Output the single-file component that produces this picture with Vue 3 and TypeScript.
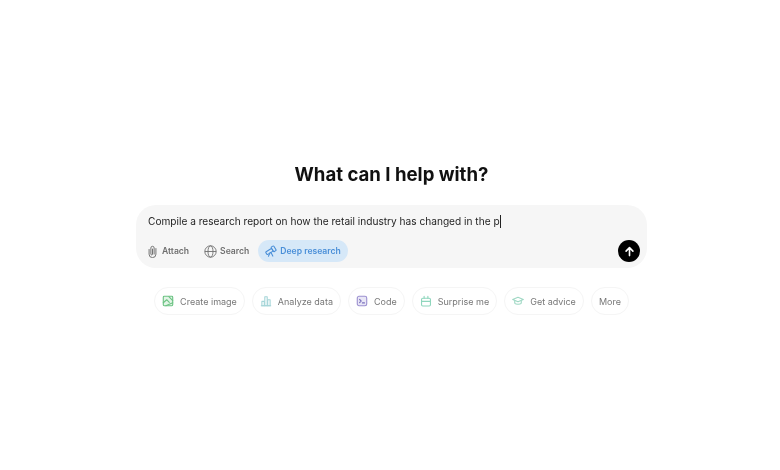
<script setup lang="ts">
const suggestions = [
  { label: 'Create image', icon: 'image', color: '#6cc383' },
  { label: 'Analyze data', icon: 'chart', color: '#a5d5d8' },
  { label: 'Code', icon: 'code', color: '#9c90d0' },
  { label: 'Surprise me', icon: 'gift', color: '#8fd6bd' },
  { label: 'Get advice', icon: 'cap', color: '#9fd8c4' },
  { label: 'More', icon: '', color: '' }
]
</script>

<template>
  <main class="page">
    <h1 class="title">What can I help with?</h1>

    <section class="composer">
      <p class="prompt">Compile a research report on how the retail industry has changed in the p<span class="caret"></span></p>
      <div class="toolbar">
        <button class="tool">
          <svg viewBox="0 0 16 16" fill="none" stroke="currentColor" stroke-width="1.2" stroke-linecap="round">
            <path d="M3.8 5.5v5.8a4.2 4.2 0 0 0 8.4 0V4.4" />
            <path d="M10 11.2V3.6a2 2 0 0 0-4 0v7.6a1 1 0 0 0 2 0V5" />
          </svg>
          Attach
        </button>
        <button class="tool">
          <svg viewBox="0 0 16 16" fill="none" stroke="currentColor" stroke-width="1.1">
            <circle cx="8" cy="8" r="7" />
            <ellipse cx="8" cy="8" rx="3.1" ry="7" />
            <path d="M1 8h14" />
          </svg>
          Search
        </button>
        <button class="tool tool-active">
          <svg viewBox="0 0 16 16" fill="none" stroke="currentColor" stroke-width="1.4" stroke-linecap="round" stroke-linejoin="round">
            <g transform="rotate(-32 8 7)">
              <rect x="0.5" y="5.2" width="9.5" height="4.2" rx="1" />
              <rect x="10" y="3.6" width="4" height="7.2" rx="1" />
            </g>
            <path d="M6.8 10.2 4.6 15M7.8 9.8l2.6 5" />
          </svg>
          Deep research
        </button>
        <button class="send" aria-label="Send">
          <svg viewBox="0 0 16 16" fill="none" stroke="#fff" stroke-width="2" stroke-linecap="round" stroke-linejoin="round">
            <path d="M8 13V3.5M3.8 7.5 8 3.3l4.2 4.2" />
          </svg>
        </button>
      </div>
    </section>

    <nav class="chips">
      <button v-for="s in suggestions" :key="s.label" class="chip">
        <svg v-if="s.icon" viewBox="0 0 14 14" fill="none" :stroke="s.color" stroke-width="1.3" stroke-linecap="round" stroke-linejoin="round">
          <template v-if="s.icon === 'image'">
            <rect x="1.5" y="1.5" width="11" height="11" rx="1" fill="#e2f4e6" />
            <path d="M1.5 9 5.5 5.5l3 3M8 2l4.5 4.5M4.5 12.5l8-3.5" />
          </template>
          <template v-else-if="s.icon === 'chart'">
            <path d="M1.5 12.5h11" />
            <rect x="2.2" y="7.5" width="2.8" height="5" />
            <rect x="5.6" y="2" width="2.8" height="10.5" />
            <rect x="9" y="5.5" width="2.8" height="7" />
          </template>
          <template v-else-if="s.icon === 'code'">
            <rect x="1.5" y="1.5" width="11" height="11" rx="2" fill="#e9e7f6" />
            <path d="M4.2 5.2 6 7 4.2 8.8M7.5 9.2h2.4" stroke="#7a70bd" />
          </template>
          <template v-else-if="s.icon === 'gift'">
            <rect x="1.8" y="3.8" width="10.4" height="9" rx="1.4" />
            <path d="M1.8 7.5h10.4M4.8 3.8V1.4M9.2 3.8V1.4" />
          </template>
          <template v-else>
            <path d="M.8 5.2 7 2.6l6.2 2.6L7 8 .8 5.2Z" />
            <path d="M3.2 7v2.6c1.2 1.6 6.4 1.6 7.6 0V7" />
          </template>
        </svg>
        {{ s.label }}
      </button>
    </nav>
  </main>
</template>

<style scoped>
.page {
  box-sizing: border-box;
  width: 780px;
  height: 470px;
  padding-top: 161px;
  display: flex;
  flex-direction: column;
  align-items: center;
  background: #fff;
  font-family: Inter, "Liberation Sans", sans-serif;
  overflow: hidden;
  filter: blur(0.35px);
}

.title {
  margin: 0 0 17px 3px;
  font-size: 18.6px;
  line-height: 27px;
  font-weight: 700;
  color: #111;
}

.composer {
  box-sizing: border-box;
  width: 511px;
  height: 63px;
  margin-left: 3px;
  padding: 8px 7px 0 12px;
  border-radius: 20px;
  background: #f6f6f6;
}

.prompt {
  margin: 0;
  font-size: 10.15px;
  line-height: 16px;
  color: #1f1f1f;
}

.caret {
  display: inline-block;
  width: 1px;
  height: 13px;
  vertical-align: -3px;
  background: #222;
}

.toolbar {
  display: flex;
  align-items: center;
  margin: 11px 0 0 -2px;
}

.tool {
  display: flex;
  align-items: center;
  gap: 3px;
  height: 22px;
  padding: 0;
  margin-right: 15px;
  border: 0;
  border-radius: 11px;
  background: none;
  font: 600 8.6px Inter, "Liberation Sans", sans-serif;
  color: #6f6f6f;
}

.tool svg {
  width: 13px;
  height: 13px;
}

.tool-active {
  padding: 0 7px;
  margin: 0 0 0 -6px;
  background: #d6e8f8;
  color: #4a8fd8;
}

.tool-active svg {
  width: 12px;
  height: 12px;
}

.send {
  display: flex;
  align-items: center;
  justify-content: center;
  width: 22px;
  height: 22px;
  padding: 0;
  margin-left: auto;
  border: 0;
  border-radius: 50%;
  background: #000;
}

.send svg {
  width: 13px;
  height: 13px;
}

.chips {
  display: flex;
  gap: 7px;
  margin-top: 19px;
  margin-left: 3px;
}

.chip {
  display: flex;
  align-items: center;
  gap: 6px;
  height: 28px;
  padding: 0 7px;
  border: 1px solid #f5f5f5;
  border-radius: 14px;
  background: #fff;
  font: 400 9px Inter, "Liberation Sans", sans-serif;
  color: #777;
}

.chip svg {
  width: 12px;
  height: 12px;
}
</style>

<style>
html, body {
  margin: 0;
  background: #fff;
}
</style>
